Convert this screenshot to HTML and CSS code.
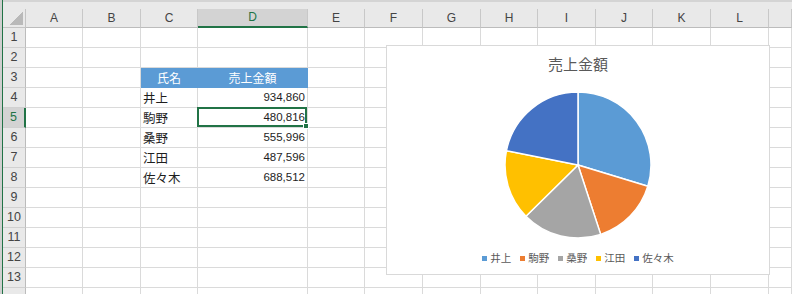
FILE: index.html
```html
<!DOCTYPE html>
<html lang="ja">
<head>
    <meta charset="UTF-8">
    <meta name="viewport" content="width=device-width, initial-scale=1.0">
    <title>売上金額</title>
    <link rel="stylesheet" href="styles.css">
</head>
<body>
    <div class="window">
        <div class="sheet">
            <div class="strip"></div>

            <div class="grid">
                <!-- column headers -->
                <div class="corner"><span class="corner-mark"></span></div>
                <div class="ch">A</div><div class="ch">B</div><div class="ch">C</div><div class="ch sel">D</div>
                <div class="ch">E</div><div class="ch">F</div><div class="ch">G</div><div class="ch">H</div>
                <div class="ch">I</div><div class="ch">J</div><div class="ch">K</div><div class="ch">L</div><div class="ch"></div>

                <!-- 1 -->
                <div class="rh">1</div>
                <div></div><div></div><div></div><div></div><div></div><div></div><div></div><div></div><div></div><div></div><div></div><div></div><div></div>
                <!-- 2 -->
                <div class="rh">2</div>
                <div></div><div></div><div></div><div></div><div></div><div></div><div></div><div></div><div></div><div></div><div></div><div></div><div></div>
                <!-- 3 -->
                <div class="rh">3</div>
                <div></div><div></div>
                <div class="head">氏名</div><div class="head">売上金額</div>
                <div></div><div></div><div></div><div></div><div></div><div></div><div></div><div></div><div></div>
                <!-- 4 -->
                <div class="rh">4</div>
                <div></div><div></div>
                <div class="name">井上</div><div class="num">934,860</div>
                <div></div><div></div><div></div><div></div><div></div><div></div><div></div><div></div><div></div>
                <!-- 5 -->
                <div class="rh sel">5</div>
                <div></div><div></div>
                <div class="name">駒野</div><div class="num active">480,816</div>
                <div></div><div></div><div></div><div></div><div></div><div></div><div></div><div></div><div></div>
                <!-- 6 -->
                <div class="rh">6</div>
                <div></div><div></div>
                <div class="name">桑野</div><div class="num">555,996</div>
                <div></div><div></div><div></div><div></div><div></div><div></div><div></div><div></div><div></div>
                <!-- 7 -->
                <div class="rh">7</div>
                <div></div><div></div>
                <div class="name">江田</div><div class="num">487,596</div>
                <div></div><div></div><div></div><div></div><div></div><div></div><div></div><div></div><div></div>
                <!-- 8 -->
                <div class="rh">8</div>
                <div></div><div></div>
                <div class="name">佐々木</div><div class="num">688,512</div>
                <div></div><div></div><div></div><div></div><div></div><div></div><div></div><div></div><div></div>
                <!-- 9 -->
                <div class="rh">9</div>
                <div></div><div></div><div></div><div></div><div></div><div></div><div></div><div></div><div></div><div></div><div></div><div></div><div></div>
                <!-- 10 -->
                <div class="rh">10</div>
                <div></div><div></div><div></div><div></div><div></div><div></div><div></div><div></div><div></div><div></div><div></div><div></div><div></div>
                <!-- 11 -->
                <div class="rh">11</div>
                <div></div><div></div><div></div><div></div><div></div><div></div><div></div><div></div><div></div><div></div><div></div><div></div><div></div>
                <!-- 12 -->
                <div class="rh">12</div>
                <div></div><div></div><div></div><div></div><div></div><div></div><div></div><div></div><div></div><div></div><div></div><div></div><div></div>
                <!-- 13 -->
                <div class="rh">13</div>
                <div></div><div></div><div></div><div></div><div></div><div></div><div></div><div></div><div></div><div></div><div></div><div></div><div></div>
                <!-- 14, cut off by the window -->
                <div class="rh"></div>
                <div></div><div></div><div></div><div></div><div></div><div></div><div></div><div></div><div></div><div></div><div></div><div></div><div></div>
            </div>

            <!-- chart floating over the cells -->
            <div class="chart">
                <div class="chart-title">売上金額</div>
                <svg class="pie" width="150" height="150" viewBox="-75 -75 150 150">
                    <path fill="#5b9bd5" d="M0 0 L0 -73 A73 73 0 0 1 69.84 21.24 Z"/>
                    <path fill="#ed7d31" d="M0 0 L69.84 21.24 A73 73 0 0 1 22.67 69.39 Z"/>
                    <path fill="#a5a5a5" d="M0 0 L22.67 69.39 A73 73 0 0 1 -52.06 51.17 Z"/>
                    <path fill="#ffc000" d="M0 0 L-52.06 51.17 A73 73 0 0 1 -71.60 -14.25 Z"/>
                    <path fill="#4472c4" d="M0 0 L-71.60 -14.25 A73 73 0 0 1 0 -73 Z"/>
                </svg>
                <div class="legend">
                    <span class="item"><i class="mark c1"></i>井上</span>
                    <span class="item"><i class="mark c2"></i>駒野</span>
                    <span class="item"><i class="mark c3"></i>桑野</span>
                    <span class="item"><i class="mark c4"></i>江田</span>
                    <span class="item"><i class="mark c5"></i>佐々木</span>
                </div>
            </div>
        </div>
    </div>
</body>
</html>
```

FILE: styles.css
```css
body {
    margin: 0;
    padding: 0;
    font-family: "Noto Sans CJK JP", sans-serif;
    background: #fff;
    color: #000;
    overflow: hidden;
}

.window {
    height: 294px;
    overflow: hidden;
    border-left: 2px solid #cfcfcf;
}

.sheet {
    position: relative;
    border-left: 1px solid #217346;
    height: 100%;
}

.strip {
    height: 9px;
    background: #e9e9e9;
    border-top: 2px solid #d4d4d4;
    box-sizing: border-box;
}

.grid {
    display: grid;
    grid-template-columns: 23px 57px 58px 57px 110px 57px 58px 58px 57px 58px 57px 58px 58px 1fr;
    grid-template-rows: 19px;
    grid-auto-rows: 20px;
}

.grid > div {
    box-sizing: border-box;
    border-right: 1px solid #dadada;
    border-bottom: 1px solid #dadada;
    padding: 0 2px;
    font-size: 12.5px;
    line-height: 19px;
    white-space: nowrap;
    overflow: hidden;
    color: #1e1e1e;
}

.grid > .corner {
    display: flex;
    justify-content: flex-end;
    align-items: flex-end;
    padding: 0 2px 2px 0;
    background: #e9e9e9;
    border-right-color: #c4c4c4;
    border-bottom-color: #c4c4c4;
}

.corner-mark {
    width: 14px;
    height: 13px;
    background: linear-gradient(to bottom right, transparent 50%, #b9b9b9 50%);
}

.grid > .ch {
    background: #e9e9e9;
    border-right-color: #c8c8c8;
    border-bottom-color: #bcbcbc;
    font-family: "Liberation Sans", sans-serif;
    font-size: 12px;
    line-height: 18px;
    text-align: center;
    color: #444;
}

.grid > .ch.sel {
    background: #d3d3d3;
    color: #217346;
    border-bottom: 2px solid #217346;
    line-height: 17px;
}

.grid > .rh {
    background: #e9e9e9;
    border-right-color: #bcbcbc;
    border-bottom-color: #d0d0d0;
    font-family: "Liberation Sans", sans-serif;
    font-size: 12.5px;
    text-align: center;
    color: #444;
    padding: 0;
}

.grid > .rh.sel {
    background: #d3d3d3;
    color: #217346;
    border-right: 2px solid #217346;
}

.grid > .head {
    background: #5b9bd5;
    border-right-color: #5b9bd5;
    border-bottom-color: #5b9bd5;
    color: #fff;
    text-align: center;
    font-size: 12px;
}

.grid > .name {
    padding-left: 2px;
}

.grid > .num {
    text-align: right;
    font-family: "Liberation Sans", sans-serif;
    font-size: 11.5px;
}

.grid > .active {
    position: relative;
    overflow: visible;
}

.active::after {
    content: "";
    position: absolute;
    top: -1px;
    left: -1px;
    right: 0;
    bottom: 0;
    border: 2px solid #217346;
}

.active::before {
    content: "";
    position: absolute;
    right: -2px;
    bottom: -2px;
    width: 4px;
    height: 4px;
    background: #217346;
    border: 1px solid #fff;
    z-index: 2;
}

/* chart */
.chart {
    position: absolute;
    left: 383px;
    top: 45px;
    width: 384px;
    height: 230px;
    box-sizing: border-box;
    border: 1px solid #d9d9d9;
    background: #fff;
    display: flex;
    flex-direction: column;
    align-items: center;
}

.chart-title {
    margin-top: 8px;
    font-size: 15px;
    line-height: 20px;
    color: #595959;
}

.pie {
    margin-top: 16px;
}

.pie path {
    stroke: #fff;
    stroke-width: 1.5;
    stroke-linejoin: round;
}

.legend {
    margin-top: 11px;
    display: flex;
    gap: 9px;
    font-size: 10.5px;
    line-height: 14px;
    color: #595959;
}

.legend .item {
    display: flex;
    align-items: center;
}

.mark {
    width: 5px;
    height: 5px;
    margin-right: 3px;
}

.c1 { background: #5b9bd5; }
.c2 { background: #ed7d31; }
.c3 { background: #a5a5a5; }
.c4 { background: #ffc000; }
.c5 { background: #4472c4; }
```
